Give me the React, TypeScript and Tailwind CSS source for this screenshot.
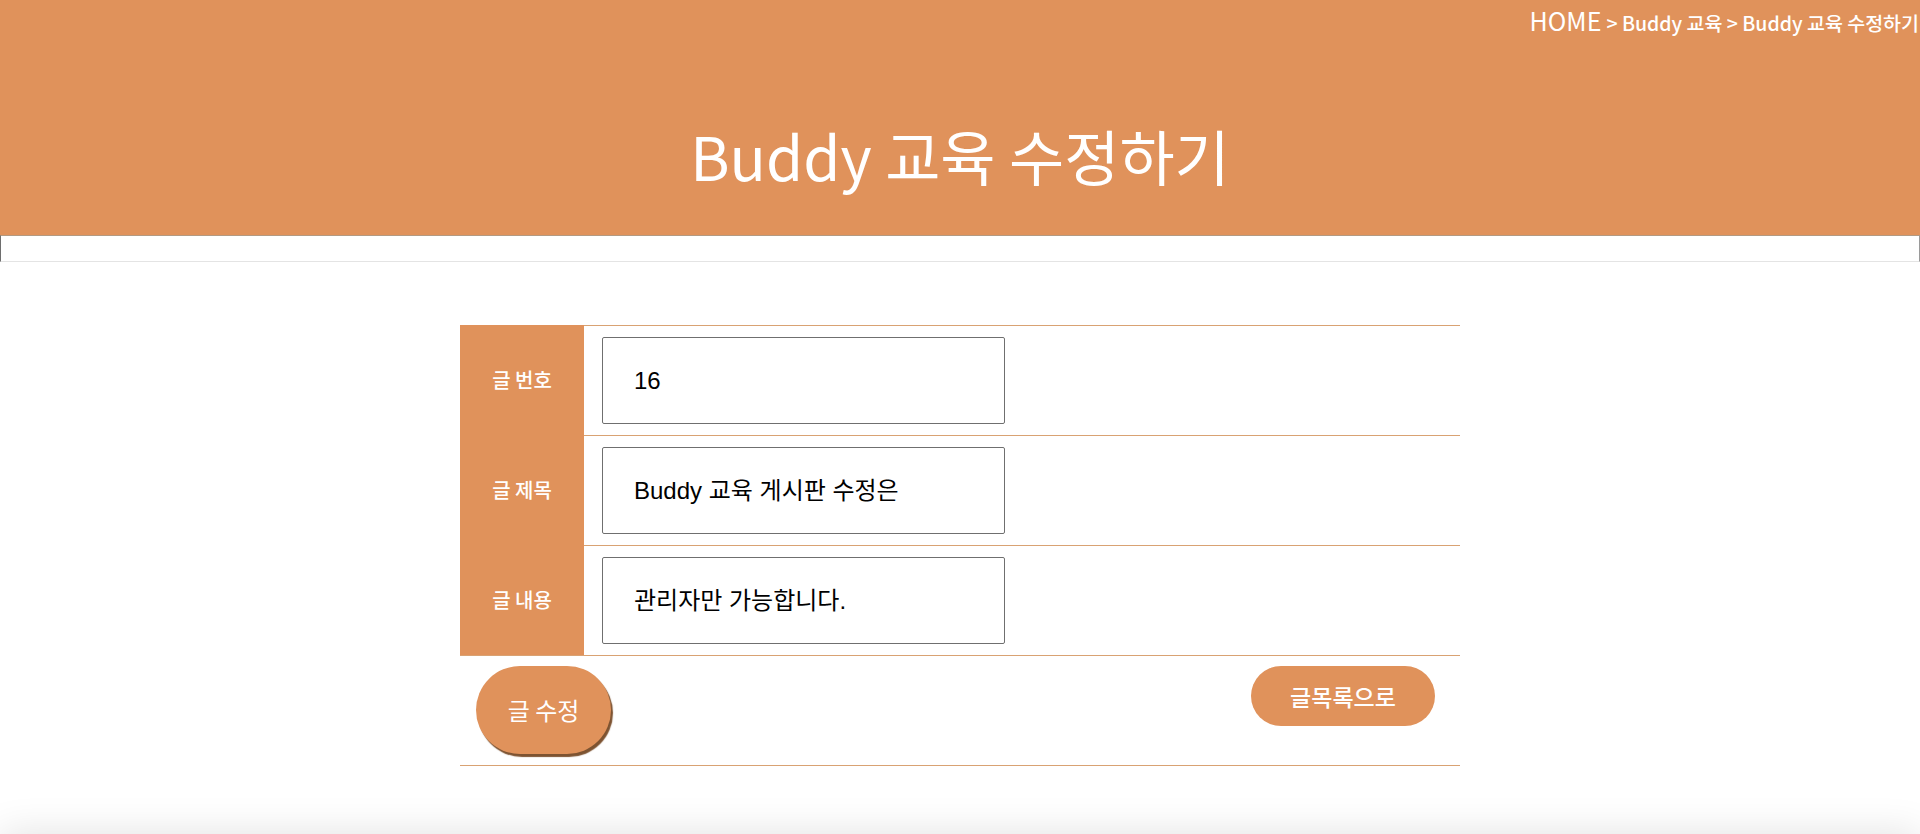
import React from "react";

const KR = { fontFamily: '"Noto Sans CJK KR", "Noto Sans", sans-serif' };
const ARIAL = { fontFamily: '"Liberation Sans", "Noto Sans CJK KR", sans-serif' };

function Row({ label, value }: { label: string; value: string }) {
  return (
    <div className="flex">
      <div
        className="w-[124px] shrink-0 bg-[#e0925b] text-white text-[20px] font-medium flex items-center justify-center"
        style={KR}
      >
        {label}
      </div>
      <div className="flex-1 border-t border-[#d9a273] pl-[18px] pt-[11px] pb-[11px]">
        <div
          className="w-[403px] h-[87px] border border-[#6f6f6f] rounded-[2px] pl-[31px] flex items-center text-[24px] text-black"
          style={ARIAL}
        >
          {value}
        </div>
      </div>
    </div>
  );
}

export default function App() {
  return (
    <div className="w-full bg-white min-h-[900px] overflow-hidden">
      <header className="h-[235px] bg-[#e0925b] flex flex-col" style={KR}>
        <div className="flex justify-end items-baseline pr-[1px] pt-[8px] text-white leading-none h-[36px]">
          <span className="text-[25px] font-normal">HOME</span>
          <span className="text-[19.5px] font-medium ml-[5px]">&gt; Buddy 교육 &gt; Buddy 교육 수정하기</span>
        </div>
        <div className="flex-1 flex items-center justify-center pt-[38px]">
          <h1 className="text-white text-[60px] font-normal leading-none">Buddy 교육 수정하기</h1>
        </div>
      </header>
      <div className="h-[27px] border border-t-[#b39a82] border-l-[#6e6e6e] border-r-[#9a9a9a] border-b-[#e4e4e4]" />

      <main className="w-[1000px] mx-auto mt-[63px]">
        <Row label="글 번호" value="16" />
        <Row label="글 제목" value="Buddy 교육 게시판 수정은" />
        <Row label="글 내용" value="관리자만 가능합니다." />
        <div className="border-t border-b border-[#d9a273] h-[111px] flex justify-between items-start pt-[10px] pl-[16px] pr-[25px]">
          <button
            className="w-[135px] h-[88px] rounded-full bg-[#e0925b] text-white text-[24px] shadow-[2px_3px_1px_#7d5331]"
            style={KR}
          >
            글 수정
          </button>
          <button
            className="w-[184px] h-[60px] rounded-full bg-[#e0925b] text-white text-[23px] font-medium"
            style={KR}
          >
            글목록으로
          </button>
        </div>
      </main>

      <footer className="mt-[68px] h-[120px] bg-white shadow-[0_0_40px_rgba(0,0,0,0.12)]" />
    </div>
  );
}
